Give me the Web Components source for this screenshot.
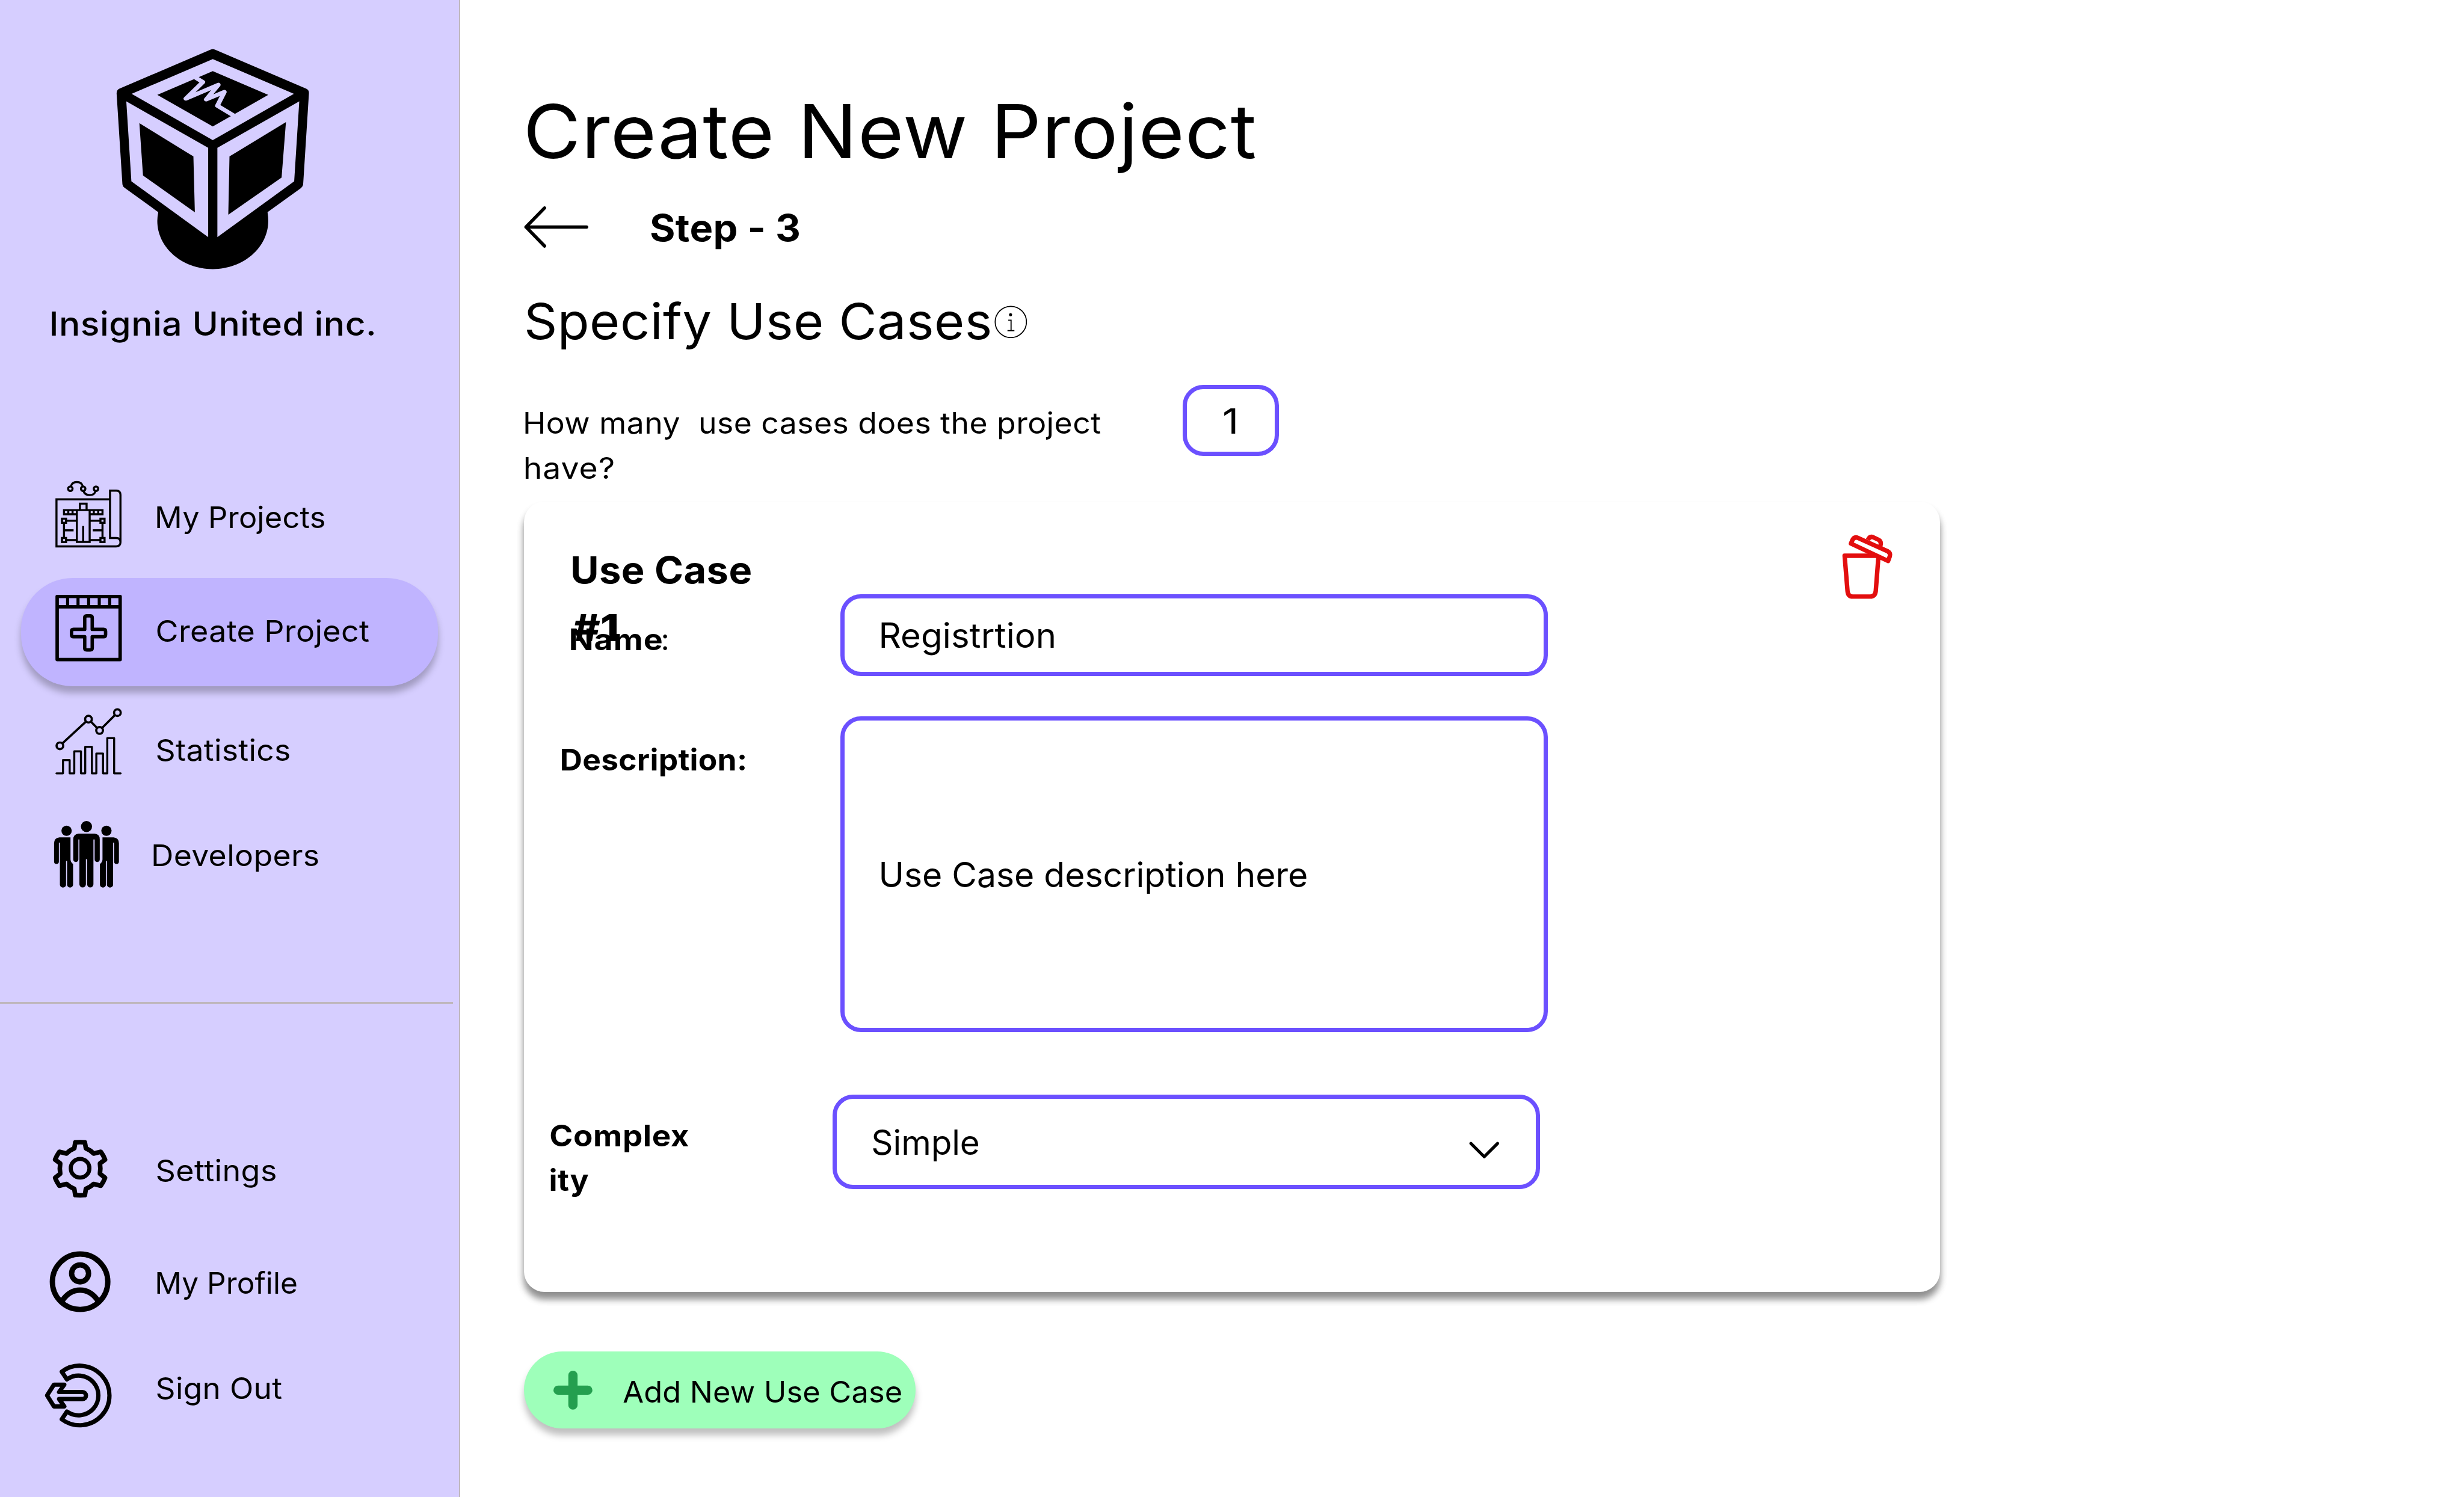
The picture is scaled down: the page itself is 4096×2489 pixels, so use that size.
<!DOCTYPE html>
<html lang="en">
<head>
<meta charset="utf-8">
<title>Create New Project</title>
<style>
/* 1rem = 100 design units */
html{font-size:85.3333px}
body{margin:0;background:#fff;color:#000;font-family:Inter,"Noto Sans",sans-serif;overflow:hidden}
</style>
</head>
<body>
<project-app></project-app>
<script>
const U = n => (n / 100) + 'rem';
const define = (name, html, setup) => customElements.define(name, class extends HTMLElement {
  constructor() {
    super();
    this.attachShadow({mode: 'open'}).innerHTML = html;
  }
  connectedCallback() { if (setup) setup(this, this.shadowRoot); }
});

/* One line of text, widened so that its ink is exactly `w` units wide */
const pen = document.createElement('canvas').getContext('2d');
customElements.define('ink-text', class extends HTMLElement {
  connectedCallback() {
    if (this.shadowRoot) return;
    const size = +this.getAttribute('size'), weight = this.getAttribute('weight') || 400;
    const w = +this.getAttribute('w'), lh = +this.getAttribute('lh') || size * 1.2;
    const text = this.getAttribute('text');
    pen.font = weight + ' ' + size * 8 + 'px Inter';
    const m = pen.measureText(text);
    const left = m.actualBoundingBoxLeft / 8;
    const ink = left + m.actualBoundingBoxRight / 8;
    /* most of the difference goes to the glyphs, the rest to the tracking */
    const ls = w && text.length > 2 ? (w - ink) * .2 / (text.length - 1) : 0;
    const sx = w ? w / (ink + ls * (text.length - 1)) : 1;
    this.attachShadow({mode: 'open'}).innerHTML = `<style>
      :host{display:block;flex:none;white-space:pre;font-size:${U(size)};font-weight:${weight};
        line-height:${U(lh)};letter-spacing:${U(ls)};${w ? `width:${U(w)}` : ''}}
      span{display:block;width:max-content;text-indent:${U(left)};transform:scaleX(${sx});transform-origin:0 50%}
      </style><span></span>`;
    this.shadowRoot.querySelector('span').textContent = text;
  }
});

const ICONS = {
  projects: ['0 0 600 480', `<g stroke-width="12"><path d="M404 159H91V434H440Q465 434 465 410V133Q465 108 440 108H404V385H440Q465 385 465 410"/>
    <path d="M228 222V184H267V222M210 222H285V408H210ZM247 315V405M210 222H135V246H210M160 222V246M185 222V246M285 222H360V246H285M309 222V246M335 222V246"/>
    <path d="M123 272h24v24h-24zM123 385h24v24h-24zM348 272h24v24h-24zM348 385h24v24h-24zM147 284H210M147 397H210M285 284H348M285 397H348M135 296V385M360 296V385M135 340H191M303 340H360"/>
    <circle cx="172" cy="97" r="13"/><circle cx="247" cy="97" r="13"/><circle cx="322" cy="97" r="13"/>
    <path d="M175 83Q182 58 210 58T245 83M249 111Q257 134 285 134T319 111"/></g>`],
  create: ['0 17 600 635', `<g stroke-width="20" stroke-linejoin="round"><path d="M95 125H463V493H95ZM95 185H463"/>
    <path stroke-width="18" d="M156 125V185M217 125V185M279 125V185M341 125V185M402 125V185"/>
    <path d="M268 238H288Q300 238 300 250V317H366Q378 317 378 329V348Q378 360 366 360H300V425Q300 437 288 437H268Q256 437 256 425V360H191Q179 360 179 348V329Q179 317 191 317H256V250Q256 238 268 238Z"/></g>`],
  stats: ['0 0 600 540', `<g stroke-width="13"><circle cx="111" cy="278" r="19.5"/><circle cx="278" cy="122" r="19.5"/><circle cx="343" cy="188" r="19.5"/><circle cx="447" cy="84" r="19.5"/>
    <path d="M125 264L264 136M292 136L329 174M357 174L433 98"/></g>
    <path stroke-width="12" stroke-linecap="round" stroke-linejoin="round" d="M91 439H129V361H168V439H195V310H234V439H259V284H298V439H324V323H363V439H388V233H428V439H466"/>`],
  people: ['0 0 600 540', `<g fill="#000" stroke="none"><circle cx="266.5" cy="92" r="32.5"/>
    <path d="M220 134H314Q344 137 344 167V285A15 15 0 0 1 314 285V168H307V430A18.5 18.5 0 0 1 270 430V283H263V430A19 18.5 0 0 1 225 430V168H219V285A15 15 0 0 1 189 285V167Q190 137 220 134Z"/>
    <g id="p"><circle cx="150" cy="117" r="30"/><path d="M108 156H173V285Q174 303 188 311V432A17.5 17 0 0 1 153 432V294H147V432A18 17 0 0 1 111 432V186H105V297A14 14 0 0 1 77 297V190Q78 159 108 156Z"/></g>
    <use href="#p" transform="translate(533 0) scale(-1 1)"/></g>`],
  gear: ['0 0 600 540', `<g stroke-width="27" stroke-linejoin="round"><path d="M201 107Q229 104 257 107L263 142Q288 151 308 172L350 162Q366 184 375 208L345 230Q350 260 345 290L375 314Q366 338 350 360L308 350Q288 369 263 378L257 415Q229 418 201 415L195 378Q170 369 150 350L108 360Q92 338 83 314L113 290Q108 260 113 230L83 208Q92 184 108 162L150 172Q170 151 195 142Z"/><circle cx="229" cy="258" r="54.5" stroke-width="24"/></g>`],
  profile: ['0 660 600 540', `<g stroke-width="31"><circle cx="229" cy="924" r="162"/><circle cx="229" cy="875" r="49.5"/><path d="M124 1036Q166 973 229 973T334 1036"/></g>`],
  signout: ['0 1290 600 540', `<g stroke-width="25" stroke-linejoin="round"><path d="M122 1447A174 174 0 1 1 122 1725L152 1680A116 116 0 1 0 152 1492Z"/><path d="M36 1586L76 1523H137L106 1566H243A20.5 20.5 0 0 1 243 1607H106L137 1650H76Z"/></g>`],
  trash: ['240 150 330 420', `<g stroke="#e30e0e" stroke-width="26" stroke-linejoin="round" stroke-linecap="round"><path d="M280 308H478L462 515Q458 547 430 547H328Q300 547 297 515Z"/><path fill="#fff" d="M317 237L326 216Q337 195 358 204L530 281Q550 292 544 312L534 339Z"/><path stroke-linecap="butt" d="M416 216Q427 192 447 200L480 216Q497 226 489 252"/></g>`],
  back: ['0 0 130 90', `<path stroke-width="6.5" stroke-linecap="round" stroke-linejoin="round" d="M122 45H4M40 8L4 45L40 82"/>`],
  info: ['0 0 64 64', `<circle cx="32" cy="32" r="30.5" stroke-width="2"/><circle cx="31.5" cy="18" r="3" fill="#000" stroke="none"/><path stroke-width="2.2" d="M27 28.5H32.5V49M25.5 49H39"/>`],
  chevron: ['0 0 64 40', `<path stroke-width="6" stroke-linecap="round" stroke-linejoin="round" d="M6 6L32 32L58 6"/>`],
  plus: ['0 0 76 76', `<path stroke="#249f4f" stroke-width="18" stroke-linecap="round" d="M38 9V67M9 38H67"/>`],
  logo: ['300 80 820 1070', `<g stroke="none"><path fill="#000" d="M700 90Q709 86 718 90L1095 277Q1106 283 1106 297L1082 735Q1080 745 1073 751L935 866Q938 890 938 908C938 1035 836 1138 709 1138C582 1138 480 1035 480 908Q480 888 484 866L345 750Q337 743 336 733L312 300Q312 283 323 277Z"/>
    <path fill="#d6ceff" d="M709 135L1044 301L709 522L374 301ZM352 337L690 559V985L373 719ZM1066 337L728 559V985L1045 719Z"/>
    <path fill="#000" d="M709 193L938 306L709 457L480 306ZM406 441L629 600L635 867L421 691ZM1011 436L778 600L773 878L993 701Z"/></g>
    <path stroke="#d6ceff" stroke-width="19" stroke-linejoin="round" d="M636 222L668 245L598 324L732 258L682 328L757 292L728 358L796 405"/>`]
};
customElements.define('app-icon', class extends HTMLElement {
  connectedCallback() {
    if (this.shadowRoot) return;
    const [box, art] = ICONS[this.getAttribute('name')];
    this.attachShadow({mode: 'open'}).innerHTML = `<style>:host{display:block;flex:none;width:${U(this.getAttribute('w'))};height:${U(this.getAttribute('h'))}}
      svg{display:block;width:100%;height:100%}</style>
      <svg viewBox="${box}" preserveAspectRatio="none" fill="none" stroke="#000">${art}</svg>`;
  }
});

/* Sidebar row: icon slot and label slot */
define('nav-item', `<style>
  :host{display:flex;align-items:center;box-sizing:border-box;padding-left:.8rem;height:1.8rem}
  :host([active]){height:2.12rem;margin:0 .41rem;padding-left:.39rem;border-radius:1rem;background:#c0b4ff;box-shadow:0 .133rem .133rem rgba(0,0,0,.25)}
  .label{margin-left:.26rem}
  </style><slot name="icon"></slot><div class="label"><slot></slot></div>`);

define('side-bar', `<style>
  :host{display:flex;flex-direction:column;box-sizing:border-box;width:8.96rem;height:29.17rem;flex:none;background:#d6ceff;border-right:.035rem solid #bfb7bd}
  .brand{height:9.2rem;box-sizing:border-box;padding:.9265rem 0 0 1.01rem}
  .brand app-icon{margin:0 0 .61rem 1.206rem}
  .main{display:flex;flex-direction:column;height:10.32rem}
  .main>*{flex:none}
  hr{margin:0;border:0;height:.04rem;width:8.83rem;background:#bfb7bd;flex:none}
  .foot{padding-top:2.34rem}
  </style>
  <div class="brand"><app-icon name="logo" w="387" h="436.7"></app-icon><ink-text text="Insignia United inc." size="64" weight="500" w="628" lh="80"></ink-text></div>
  <div class="main">
    <nav-item style="height:1.6rem"><app-icon slot="icon" name="projects" w="200" h="160"></app-icon><ink-text style="margin-top:.18rem" text="My Projects" size="58" w="326"></ink-text></nav-item>
    <nav-item active style="margin-top:.456rem"><app-icon slot="icon" name="create" w="200" h="212"></app-icon><ink-text style="margin-top:-.035rem" text="Create Project" size="58" w="413"></ink-text></nav-item>
    <nav-item style="margin-top:.224rem"><app-icon slot="icon" name="stats" w="200" h="180"></app-icon><ink-text style="margin-top:.24rem" text="Statistics" size="58" w="258"></ink-text></nav-item>
    <nav-item style="margin-top:.4rem"><app-icon slot="icon" name="people" w="200" h="180"></app-icon><ink-text style="margin:-.06rem 0 0 -.07rem" text="Developers" size="58" w="321"></ink-text></nav-item>
  </div>
  <hr>
  <div class="foot">
    <nav-item><app-icon slot="icon" name="gear" w="200" h="180"></app-icon><ink-text style="margin-top:.02rem" text="Settings" size="58" w="231"></ink-text></nav-item>
    <nav-item style="margin-top:.4rem"><app-icon slot="icon" name="profile" w="200" h="180"></app-icon><ink-text style="margin-top:.02rem" text="My Profile" size="58" w="272"></ink-text></nav-item>
    <nav-item style="margin-top:.3rem"><app-icon slot="icon" name="signout" w="200" h="180"></app-icon><ink-text style="margin-top:-.08rem" text="Sign Out" size="58" w="243"></ink-text></nav-item>
  </div>`);

define('field-box', `<style>
  :host{display:flex;align-items:center;justify-content:space-between;box-sizing:border-box;flex:none;width:13.78rem;border:.083rem solid #6b50ff;border-radius:.4rem;background:#fff;padding:.04rem .7rem 0 .71rem}
  </style><slot></slot>`);

define('form-row', `<style>
  :host{display:flex;align-items:flex-start}
  .label{flex:none;box-sizing:border-box;display:flex;width:var(--label-w)}
  </style><div class="label"><slot name="label"></slot></div><slot></slot>`);

define('use-case-card', `<style>
  :host{display:block;box-sizing:border-box;width:27.58rem;height:15.4rem;padding-top:.53rem;border-radius:.4rem;background:#fff;
    box-shadow:0 .133rem .133rem rgba(0,0,0,.25),0 .133rem .133rem rgba(0,0,0,.25)}
  header{display:flex;justify-content:space-between;align-items:flex-start;height:1.28rem;padding:0 .89rem 0 .95rem}
  .title{padding-top:.245rem}
  </style>
  <header>
    <div class="title"><ink-text text="Use Case" size="73" weight="700" w="347" lh="113"></ink-text><ink-text text="#1" size="73" weight="800" w="86" lh="113"></ink-text></div>
    <app-icon name="trash" w="110" h="140"></app-icon>
  </header>
  <form-row style="padding-left:.91rem;--label-w:5.255rem">
    <div slot="label" style="display:flex;padding-top:.475rem"><ink-text text="Name" size="58" weight="700" w="177" lh="80"></ink-text><ink-text style="margin-left:.03rem" text=":" size="58" lh="80"></ink-text></div>
    <field-box style="height:1.59rem"><ink-text text="Registrtion" size="67" w="336"></ink-text></field-box>
  </form-row>
  <form-row style="padding-left:.74rem;margin-top:.79rem;--label-w:5.425rem">
    <ink-text slot="label" style="margin-top:.44rem" text="Description:" size="58" weight="700" w="357" lh="80"></ink-text>
    <field-box style="height:6.15rem"><ink-text text="Use Case description here" size="67" w="829"></ink-text></field-box>
  </form-row>
  <form-row style="padding-left:.51rem;margin-top:1.22rem;--label-w:5.495rem">
    <div slot="label" style="padding-top:.365rem"><ink-text text="Complex" size="58" weight="700" w="269" lh="87"></ink-text><ink-text text="ity" size="58" weight="700" w="74" lh="87"></ink-text></div>
    <field-box style="height:1.84rem;padding-right:.68rem"><ink-text text="Simple" size="67" w="206"></ink-text><app-icon name="chevron" w="64" h="40" style="margin-top:.3rem"></app-icon></field-box>
  </form-row>`);

define('add-button', `<style>
  :host{display:flex;align-items:center;box-sizing:border-box;width:7.625rem;height:1.5rem;padding-left:.57rem;border-radius:.75rem;background:#9effba;box-shadow:0 .133rem .133rem rgba(0,0,0,.25)}
  .label{margin:.09rem 0 0 .6rem}
  </style><app-icon name="plus" w="76" h="76"></app-icon><div class="label"><slot></slot></div>`);

define('project-app', `<style>
  :host{display:flex;width:48rem;height:29.17rem;background:#fff}
  main{flex:1;padding:1.46rem 0 0 1.25rem}
  .step{display:flex;align-items:center;height:1.24rem;margin-top:.14rem}
  .step ink-text{margin:.05rem 0 0 1.17rem}
  .head{display:flex;align-items:center;height:1.3rem;margin-top:.58rem}
  .ask{display:flex;align-items:flex-start;height:2.27rem;margin-top:.58rem}
  .ask .q{width:12.81rem;padding:.32rem 0 0 .02rem}
  </style>
  <side-bar></side-bar>
  <main>
    <ink-text style="margin-left:.06rem" text="Create New Project" size="145" w="1419" lh="220"></ink-text>
    <div class="step"><app-icon name="back" w="130" h="90"></app-icon><ink-text text="Step - 3" size="73" weight="700" w="289"></ink-text></div>
    <div class="head"><ink-text style="margin-left:.04rem" text="Specify Use Cases" size="97" w="903"></ink-text><app-icon style="margin-left:.09rem" name="info" w="64" h="64"></app-icon></div>
    <div class="ask">
      <div class="q"><ink-text text="How many  use cases does the project" size="57" w="1121" lh="87.5"></ink-text><ink-text text="have?" size="57" w="172" lh="87.5"></ink-text></div>
      <field-box style="width:1.88rem;height:1.38rem;padding:.05rem .04rem 0 0;justify-content:center"><ink-text text="1" size="67" w="22"></ink-text></field-box>
    </div>
    <use-case-card></use-case-card>
    <add-button style="margin-top:1.166rem"><ink-text text="Add New Use Case" size="58" w="542"></ink-text></add-button>
  </main>`);
</script>
</body>
</html>
